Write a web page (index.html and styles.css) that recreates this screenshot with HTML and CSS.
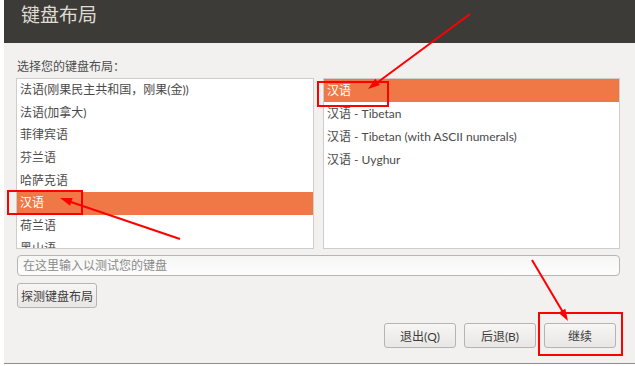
FILE: index.html
```html
<!DOCTYPE html>
<html lang="zh-CN">
<head>
    <meta charset="UTF-8">
    <title>键盘布局</title>
    <link rel="stylesheet" href="styles.css">
</head>
<body>

<div class="window">
    <div class="header">
        <h1 class="title">键盘布局</h1>
    </div>

    <div class="content">
        <div class="label">选择您的键盘布局：</div>

        <div class="lists">
            <ul class="list list-left">
                <li>法语(刚果民主共和国，刚果(金))</li>
                <li>法语(加拿大)</li>
                <li>菲律宾语</li>
                <li>芬兰语</li>
                <li>哈萨克语</li>
                <li class="selected">汉语</li>
                <li>荷兰语</li>
                <li>黑山语</li>
            </ul>
            <ul class="list list-right">
                <li class="selected">汉语</li>
                <li>汉语 - Tibetan</li>
                <li>汉语 - Tibetan (with ASCII numerals)</li>
                <li>汉语 - Uyghur</li>
            </ul>
        </div>

        <input class="test-input" type="text" placeholder="在这里输入以测试您的键盘">

        <div class="detect-row">
            <button class="btn btn-detect">探测键盘布局</button>
        </div>

        <div class="actions">
            <button class="btn">退出(Q)</button>
            <button class="btn">后退(B)</button>
            <button class="btn">继续</button>
        </div>
    </div>
</div>

<!-- red markup drawn over the screenshot -->
<svg class="marks" width="635" height="366" viewBox="0 0 635 366">
    <g fill="none" stroke="#f00" stroke-width="2">
        <rect x="318" y="82" width="70" height="24"/>
        <rect x="8" y="191" width="74" height="23"/>
        <rect x="539" y="313" width="83" height="42"/>
        <line x1="470" y1="14" x2="374" y2="85"/>
        <line x1="180" y1="239" x2="68" y2="201"/>
        <line x1="532" y1="260" x2="564" y2="314"/>
    </g>
    <g fill="#f00">
        <polygon points="368,89 380,85.1 375.3,78.7"/>
        <polygon points="60,198 72.6,198.1 70.1,205.7"/>
        <polygon points="568,321 565.3,308.7 558.5,312.7"/>
    </g>
</svg>

</body>
</html>
```

FILE: styles.css
```css
body {
    margin: 0;
    background: #fff;
    font-family: Lato, "Noto Sans CJK SC", sans-serif;
    font-size: 12px;
    color: #3c3c3c;
}
.window {
    margin-left: 4px;
    width: 631px;
    height: 364px;
    background: #f2f1f0;
    border-bottom: 1px solid #8f8d8a;
    box-sizing: border-box;
    display: flex;
    flex-direction: column;
}
.header {
    height: 43px;
    background: #3c3b37;
    padding-left: 17px;
}
.title {
    margin: 0;
    font-size: 19px;
    font-weight: normal;
    line-height: 29px;
    color: #dfdbd2;
}
.content {
    padding: 16px 15px 0 12px;
    display: flex;
    flex-direction: column;
}
.label {
    line-height: 16px;
    margin-left: 1px;
    margin-bottom: 3px;
    color: #4c4c4c;
}
.lists {
    display: flex;
    gap: 9px;
    height: 171px;
}
.list {
    margin: 0;
    padding: 0;
    list-style: none;
    background: #fff;
    border: 1px solid #cfcdca;
    overflow: hidden;
    box-sizing: border-box;
}
.list-left {
    width: 298px;
}
.list-right {
    width: 297px;
}
.list li {
    height: 23px;
    line-height: 23px;
    padding-left: 3px;
    white-space: nowrap;
    color: #4a4a4a;
}
.list-left li {
    height: 22.7px;
    line-height: 22.7px;
}
.list li.selected {
    background: #f07746;
    color: #fff;
}
.test-input {
    margin: 6px 0 0 1px;
    width: 603px;
    height: 21px;
    box-sizing: border-box;
    border: 1px solid #b9b6b2;
    border-radius: 4px;
    background: linear-gradient(#f6f6f5, #fdfdfd);
    padding: 0 5px;
    font-family: inherit;
    font-size: 12px;
    color: #3c3c3c;
}
.test-input::placeholder {
    color: #8a8a8a;
}
.detect-row {
    margin: 7px 0 0 1px;
}
.btn {
    height: 25px;
    padding: 0;
    border: 1px solid #b7b3ae;
    border-radius: 3px;
    background: linear-gradient(#f7f6f5, #e9e7e5);
    font-family: inherit;
    font-size: 12px;
    color: #3c3c3c;
    box-sizing: border-box;
}
.btn-detect {
    width: 80px;
}
.actions {
    display: flex;
    justify-content: flex-end;
    gap: 8px;
    margin-top: 15px;
    padding-right: 4px;
}
.actions .btn {
    width: 72px;
}
.marks {
    position: absolute;
    top: 0;
    left: 0;
    pointer-events: none;
}
```
